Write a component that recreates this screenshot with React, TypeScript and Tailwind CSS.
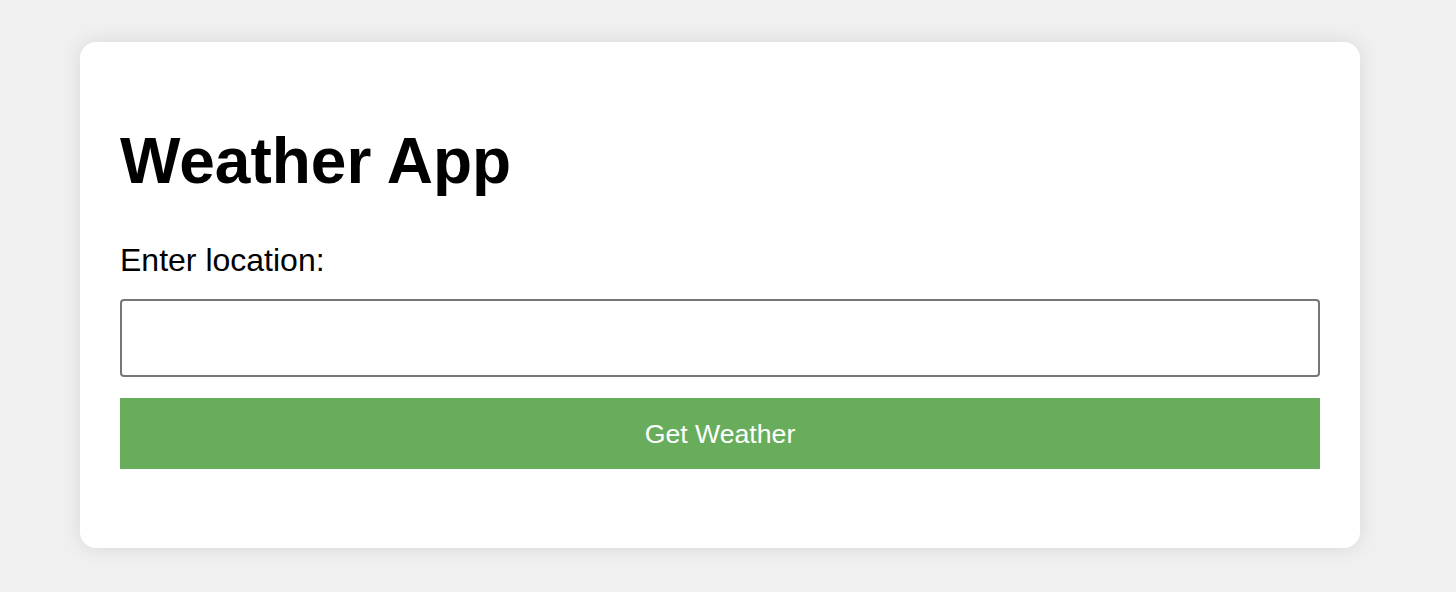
import React from "react";

export default function App() {
  return (
    <div
      className="w-[1456px] h-[592px] bg-[#f0f0f0] pt-[42px] pl-[80px]"
      style={{ fontFamily: '"Liberation Sans", Arial, sans-serif' }}
    >
      <div className="w-[1280px] bg-white rounded-[16px] shadow-[0_0_20px_rgba(0,0,0,0.1)] px-[40px] pt-[40px] pb-[79px] h-[506px]">
        <h1 className="text-[64px] font-bold leading-[73.6px] text-black mt-[43px] mb-[43px]">
          Weather App
        </h1>
        <label className="block text-[32px] leading-[36.8px] text-black mt-[2px]">
          Enter location:
        </label>
        <input
          type="text"
          className="block w-full h-[78px] mt-[21px] border-2 border-[#767676] rounded-[4px] px-[4px] text-[26.67px] outline-none"
        />
        <button className="block w-full h-[71px] mt-[21px] bg-[#68ad5c] text-white text-[26.67px] leading-[30px]">
          Get Weather
        </button>
      </div>
    </div>
  );
}
